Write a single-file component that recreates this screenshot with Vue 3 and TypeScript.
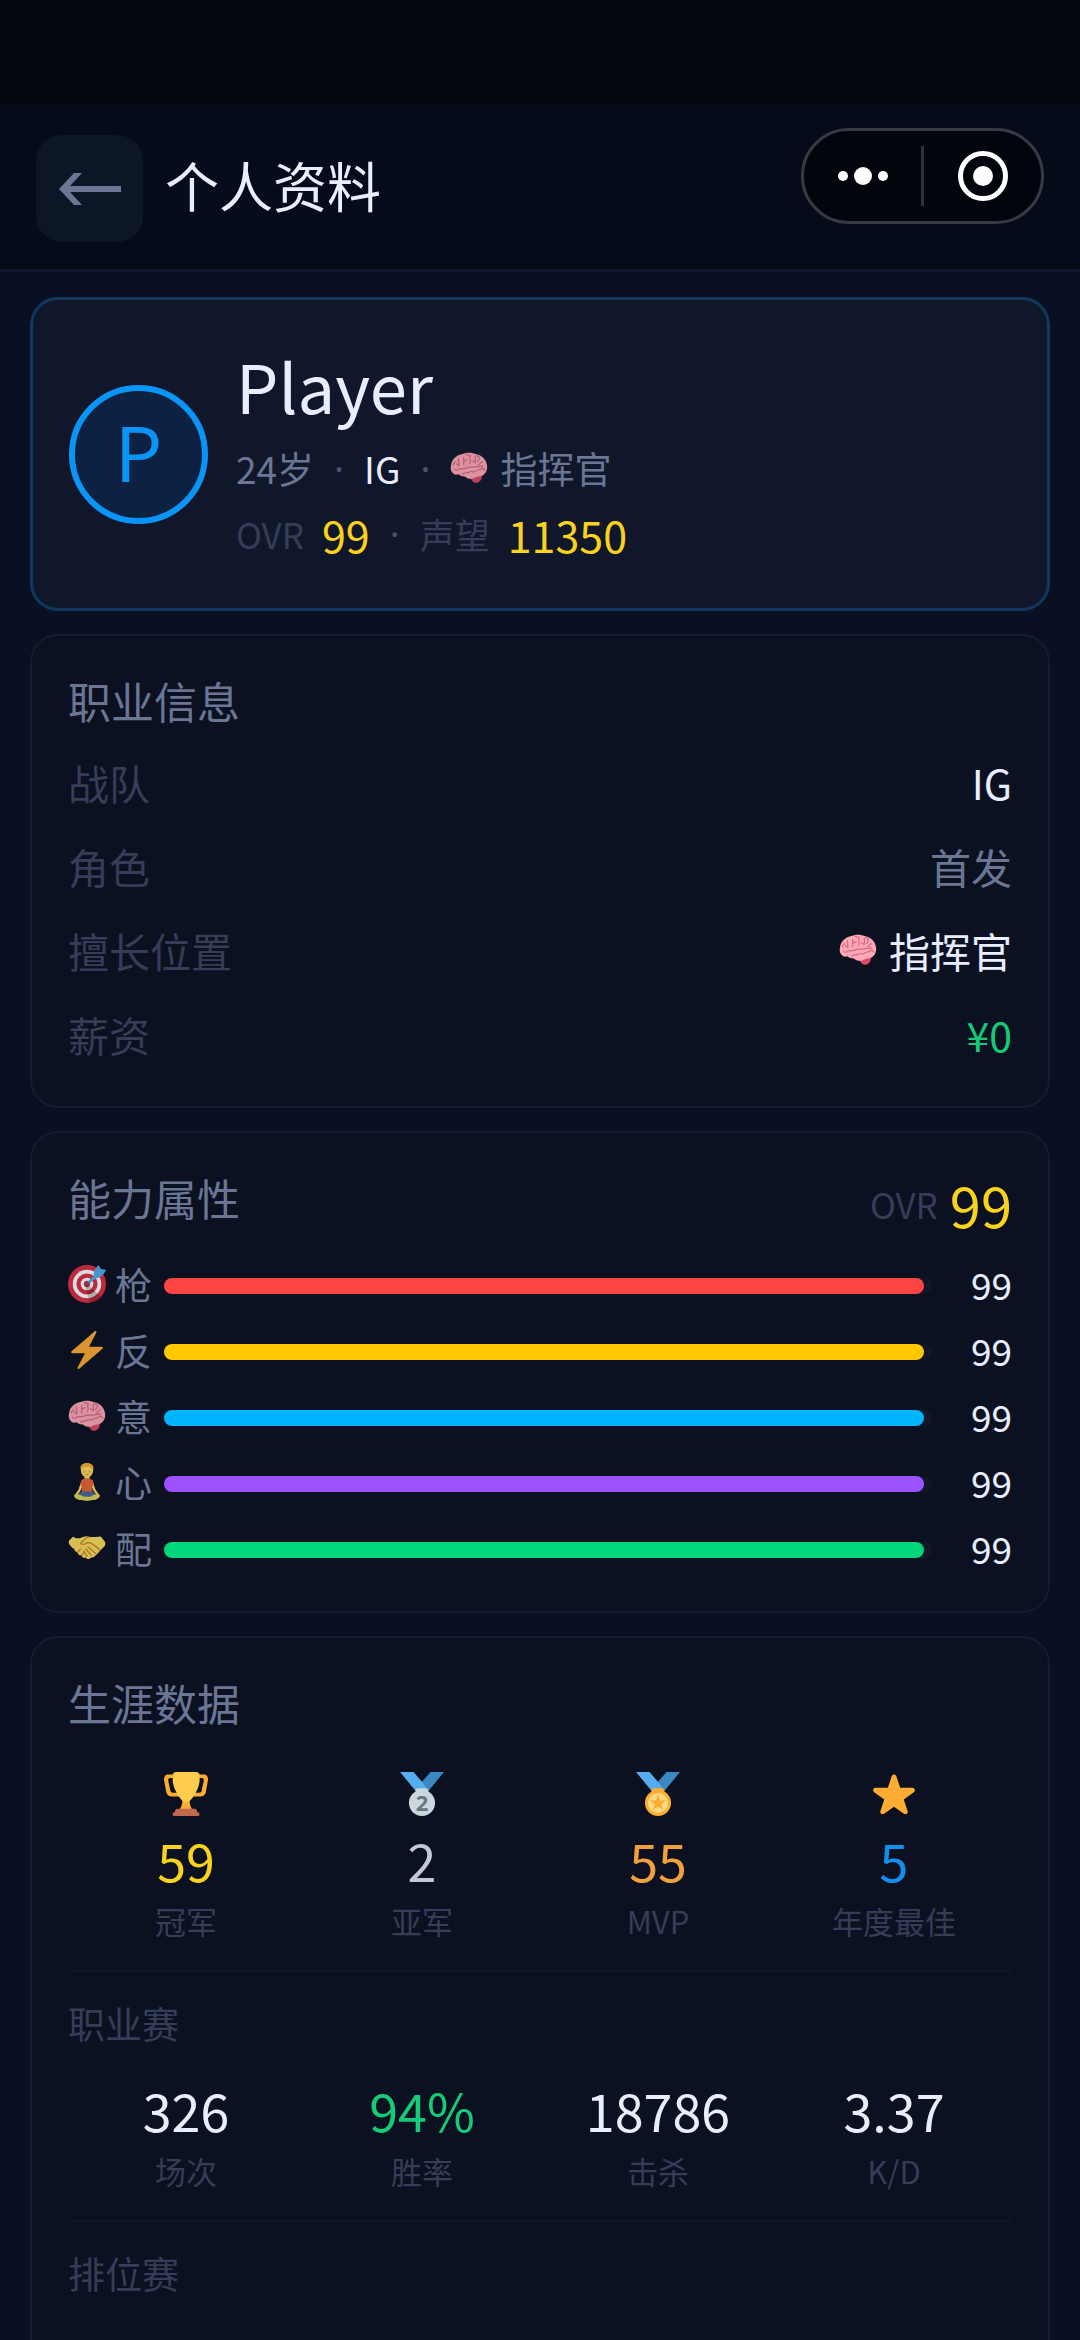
<script setup lang="ts">
type Tone = 'gold' | 'silver' | 'bronze' | 'blue' | 'green' | 'text'

interface Attribute {
  icon: string
  label: string
  value: number
  color: string
}

interface Stat {
  icon?: string
  value: string
  label: string
  tone: Tone
}

const attributes: Attribute[] = [
  { icon: 'target', label: '枪', value: 99, color: '#ff4444' },
  { icon: 'bolt', label: '反', value: 99, color: '#ffc800' },
  { icon: 'brain', label: '意', value: 99, color: '#00b4ff' },
  { icon: 'calm', label: '心', value: 99, color: '#9b51ff' },
  { icon: 'hands', label: '配', value: 99, color: '#00d67a' },
]

const honours: Stat[] = [
  { icon: 'trophy', value: '59', label: '冠军', tone: 'gold' },
  { icon: 'silver', value: '2', label: '亚军', tone: 'silver' },
  { icon: 'medal', value: '55', label: 'MVP', tone: 'bronze' },
  { icon: 'star', value: '5', label: '年度最佳', tone: 'blue' },
]

const proStats: Stat[] = [
  { value: '326', label: '场次', tone: 'text' },
  { value: '94%', label: '胜率', tone: 'green' },
  { value: '18786', label: '击杀', tone: 'text' },
  { value: '3.37', label: 'K/D', tone: 'text' },
]
</script>

<template>
  <div class="app">
    <svg class="sprite" aria-hidden="true">
      <symbol id="brain" viewBox="0 0 36 36">
        <path fill="#dd4a63" d="M19 27c2-3 8-4 11-2 1 3-2 7-6 7-2 0-3-2-5-5z" />
        <path fill="#ffa9b8" d="M4 24C1 22 0 19 1 15.500 1.500 10 6 6 11 5c4-2 10-2 14 0 5 1 9 4.500 10 10 .8 4-.5 8-4 10-3 1-7 1-9 3-3 .5-6 0-8-2-3 0-5-1-6-2-1.500.500-3 .5-4 0z" />
        <g fill="none" stroke="#d6687e" stroke-width="1.100" stroke-linecap="round" stroke-linejoin="round">
          <path d="M4 19c2 2 4 1 5-.500 3 1 7-.500 10-1.500 3 .8 8-.5 12-1" />
          <path d="M8 9c0 3 .5 5 .5 7M6 14l2.500 2M13 8v7M13 12l3-2M19 6c-1 3 1 5-.500 8M24 7v6l-3-2M28 9l-2 3M31 12c-2 0-2 2-4 3" />
          <path d="M12 24c2-3 4 0 6-2s4 1 6-1 4 0 7-3M31 18l2 2M5 12l-2 3M15 5l3 1M25 6l3 2" />
        </g>
      </symbol>
      <symbol id="target" viewBox="0 0 36 36">
        <circle cx="18" cy="18" r="18" fill="#dd2e44" />
        <circle cx="18" cy="18" r="13.500" fill="#fff" />
        <circle cx="18" cy="18" r="10" fill="#dd2e44" />
        <circle cx="18" cy="18" r="6" fill="#fff" />
        <circle cx="18" cy="18" r="3" fill="#dd2e44" />
        <path fill="#000" opacity=".2" d="M18.240 18.282l13.144 11.754A18 18 0 0 1 20.820 35.700L15.700 18.282z" />
        <path d="M18.300 18.300L28 8" stroke="#2a6797" stroke-width="2" stroke-linecap="round" />
        <path fill="#55acee" d="M24.500 10.500c-.8-3 .5-7 4.500-10.500l2.200 3.700L36 4.500c-2 5-5 7.500-9.500 8.200L20 17l-1-1z" />
      </symbol>
      <symbol id="bolt" viewBox="0 0 36 36">
        <path fill="#ffac33" d="M32.938 15.651C32.792 15.260 32.418 15 32 15H19.925L26.890 1.458c.219-.426.106-.947-.271-1.243C26.437.071 26.218 0 26 0c-.233 0-.466.082-.653.243L18 6.588 3.347 19.243c-.316.273-.430.714-.284 1.105S3.582 21 4 21h12.075L9.110 34.542c-.219.426-.106.947.271 1.243.182.144.401.215.619.215.233 0 .466-.082.653-.243L18 29.412l14.653-12.655c.317-.273.430-.714.285-1.106z" />
      </symbol>
      <symbol id="calm" viewBox="0 0 36 36">
        <path fill="#ffdc5d" d="M15.500 10h5v5h-5zM13 16l-3 9-4 6 2 1 4-6 3-7zM23 16l3 9 4 6-2 1-4-6-3-7z" />
        <path fill="#e8653a" d="M13 16c1-1.500 9-1.500 10 0l1.500 4-1.500 2v6H13v-6l-1.500-2z" />
        <path fill="#4a6a9c" d="M12.500 27h11l4 4-9 3-10-3z" />
        <path fill="#dfd75c" d="M6 30c3-1 6 0 9 2h6c3-2 6-3 9-2 1 3-3 5-7 5-2 1-8 1-10 0-4 0-8-2-7-5z" />
        <ellipse cx="18" cy="7" rx="5.800" ry="6.500" fill="#ffdc5d" />
        <path fill="#ffac33" d="M11.800 6C11.500 2 14 0 18 0s6.500 2 6.200 6c-2-1-3-2.500-5-2.500S14 4 11.800 6z" />
        <path d="M14.500 8.200q1 .8 2 0M19.500 8.200q1 .8 2 0M16.500 10.800q1.500 1 3 0" fill="none" stroke="#a5673a" stroke-width=".7" />
      </symbol>
      <symbol id="hands" viewBox="0 0 36 36">
        <path fill="#ffdc5d" d="M1 11l4-4c2 2 4 2 7 1.500C15 7 18 6 20 7.500c4 0 8 0 11-.5l4 5c1 2 0 4-1 5-3 2-5 6-8 8-1 2-3 2-4 2-2 2-4 2-5 0-2 1-4-.5-4-2-2 0-4-1-4-3-2 0-3-2-3-3-2-1-4-3-5-5-.5-1-.500-2 0-3z" />
        <path fill="none" stroke="#c48f2d" stroke-width="1.300" stroke-linecap="round" d="M20 7.500c-4 1-6 4-8 6 1 2 4 1 6-.5h3c3 2 7 4 9 7M19 17l7 6M17 19l5 6M15 21l3 5M9 22l3-3M13 25l2-3" />
      </symbol>
      <symbol id="trophy" viewBox="0 0 36 36">
        <path fill="#ffac33" d="M5.123 5h6C12.227 5 13 4.896 13 6V4c0-1.104-.773-2-1.877-2h-8c-2 0-3.583 2.125-3 5 0 0 1.791 9.375 1.917 9.958C2.373 18.500 4.164 20 6.081 20h6.958c1.105 0-.039-1.896-.039-3v-2c0 1.104-.773 2-1.877 2h-4c-1.104 0-1.833-1.042-2-2S3.539 7.667 3.539 7.667C3.206 5.750 4.018 5 5.123 5zm25.812 0h-6C23.831 5 22 4.896 22 6V4c0-1.104 1.831-2 2.935-2h8c2 0 3.584 2.125 3 5 0 0-1.633 9.419-1.771 10-.354 1.500-2.042 3-4 3h-7.146C21.914 20 22 18.104 22 17v-2c0 1.104 1.831 2 2.935 2h4c1.104 0 1.834-1.042 2-2s1.584-7.333 1.584-7.333C32.851 5.750 32.040 5 30.935 5zM20.832 22c0-6.958-2.709 0-2.709 0s-3-6.958-3 0-3.291 10-3.291 10h12.292s-3.292-3.042-3.292-10z" />
        <path fill="#ffcc4d" d="M29.123 6.577c0 6.775-6.770 18.423-11 18.423-4.231 0-11-11.649-11-18.423V3c0-2 1-3 3-3h16c2 0 3 1 3 3z" />
        <path fill="#c1694f" d="M27 33H9v-1c0-1.104 1.164-2 2.268-2h13.710c1.105 0 2.022.896 2.022 2zM29 34.625c0 .76.165 1.375-1.252 1.375H8.498C7.206 36 7 35.385 7 34.625v-.250C7 33.615 7.738 33 8.498 33h19.250c.76 0 1.252.615 1.252 1.375z" />
      </symbol>
      <symbol id="silver" viewBox="0 0 36 36">
        <path fill="#55acee" d="M18 8l-7-8H0l14 17 11.521-4.750z" />
        <path fill="#3b88c3" d="M25 0l-7 8 5.390 7.312 1.227-1.489L36 0z" />
        <path fill="#ccd6dd" d="M23.205 16.026c.080-.217.131-.448.131-.693 0-1.104-.896-2-2-2h-6.667c-1.105 0-2 .896-2 2 0 .245.050.476.131.693-3.258 1.826-5.464 5.307-5.464 9.307C7.335 31.224 12.111 36 18.002 36s10.667-4.776 10.667-10.667c0-4-2.206-7.481-5.464-9.307z" />
        <text x="18" y="32" text-anchor="middle" class="rank">2</text>
      </symbol>
      <symbol id="medal" viewBox="0 0 36 36">
        <path fill="#55acee" d="M18 8l-7-8H0l14 17 11.521-4.750z" />
        <path fill="#3b88c3" d="M25 0l-7 8 5.390 7.312 1.227-1.489L36 0z" />
        <path fill="#ffac33" d="M23.205 16.026c.080-.217.131-.448.131-.693 0-1.104-.896-2-2-2h-6.667c-1.105 0-2 .896-2 2 0 .245.050.476.131.693-3.258 1.826-5.464 5.307-5.464 9.307C7.335 31.224 12.111 36 18.002 36s10.667-4.776 10.667-10.667c0-4-2.206-7.481-5.464-9.307z" />
        <circle cx="18" cy="25.333" r="8.200" fill="#ffd983" />
        <path fill="#ffac33" d="M18 18.500l1.700 4.700 5 .100-4 3 1.500 4.800-4.200-2.900-4.200 2.900 1.500-4.800-4-3 5-.100z" />
      </symbol>
      <symbol id="star" viewBox="0 0 36 36">
        <path fill="#ffac33" d="M27.287 34.627c-.404 0-.806-.124-1.152-.371L18 28.422l-8.135 5.834c-.343.246-.744.371-1.147.371-.406 0-.810-.127-1.156-.377-.692-.508-.978-1.402-.711-2.216l3.165-9.620-8.254-5.878c-.695-.504-.990-1.396-.732-2.213.257-.819 1.010-1.379 1.868-1.389l10.086-.016 3.184-9.562C16.451 2.541 17.202 2 18 2s1.549.541 1.834 1.362l3.232 9.556 10.042.012c.862.010 1.613.570 1.870 1.389.257.817-.038 1.709-.732 2.213l-8.254 5.878 3.165 9.620c.267.814-.018 1.708-.710 2.216-.347.254-.751.381-1.160.381z" />
      </symbol>
    </svg>

    <div class="status-bar"></div>
    <header class="nav">
      <button class="back" type="button" aria-label="返回">
        <svg viewBox="0 0 62 34" aria-hidden="true">
          <path d="M0 17L15 1h8L11 14h51v6H11l12 13h-8z" />
        </svg>
      </button>
      <h1 class="title">个人资料</h1>
      <div class="capsule">
        <button type="button" aria-label="更多">
          <svg viewBox="0 0 50 18" width="50" height="18" aria-hidden="true">
            <circle cx="5" cy="9" r="5" />
            <circle cx="25" cy="9" r="9" />
            <circle cx="45" cy="9" r="5" />
          </svg>
        </button>
        <span class="capsule-line"></span>
        <button type="button" aria-label="关闭">
          <svg viewBox="0 0 50 50" width="50" height="50" aria-hidden="true">
            <circle cx="25" cy="25" r="22.500" fill="none" stroke="#fff" stroke-width="5" />
            <circle cx="25" cy="25" r="10" />
          </svg>
        </button>
      </div>
    </header>

    <main class="content">
      <section class="card hero">
        <div class="avatar">P</div>
        <div class="identity">
          <h2 class="name">Player</h2>
          <div class="line">
            <span>24岁</span>
            <span class="dot">·</span>
            <span class="team">IG</span>
            <span class="dot">·</span>
            <span class="role"><svg class="emoji dim"><use href="#brain" /></svg>指挥官</span>
          </div>
          <div class="line small">
            <span>OVR</span>
            <strong>99</strong>
            <span class="dot">·</span>
            <span>声望</span>
            <strong>11350</strong>
          </div>
        </div>
      </section>

      <section class="card">
        <h2 class="card-title">职业信息</h2>
        <dl class="info">
          <div class="info-row">
            <dt>战队</dt>
            <dd>IG</dd>
          </div>
          <div class="info-row">
            <dt>角色</dt>
            <dd class="secondary">首发</dd>
          </div>
          <div class="info-row">
            <dt>擅长位置</dt>
            <dd class="role"><svg class="emoji"><use href="#brain" /></svg>指挥官</dd>
          </div>
          <div class="info-row">
            <dt>薪资</dt>
            <dd class="green">¥0</dd>
          </div>
        </dl>
      </section>

      <section class="card">
        <div class="card-head">
          <h2 class="card-title">能力属性</h2>
          <div class="overall"><span>OVR</span><strong>99</strong></div>
        </div>
        <ul class="attributes">
          <li v-for="item in attributes" :key="item.label" class="attribute">
            <span class="attribute-label">
              <svg class="emoji dim"><use :href="`#${item.icon}`" /></svg>{{ item.label }}
            </span>
            <span class="track">
              <span class="fill" :style="{ width: `${item.value}%`, background: item.color }"></span>
            </span>
            <span class="attribute-value">{{ item.value }}</span>
          </li>
        </ul>
      </section>

      <section class="card">
        <h2 class="card-title">生涯数据</h2>
        <div class="stats">
          <div v-for="stat in honours" :key="stat.label" class="stat">
            <span class="stat-icon"><svg><use :href="`#${stat.icon}`" /></svg></span>
            <span class="stat-value" :class="stat.tone">{{ stat.value }}</span>
            <span class="stat-label">{{ stat.label }}</span>
          </div>
        </div>
        <h3 class="sub-title">职业赛</h3>
        <div class="stats">
          <div v-for="stat in proStats" :key="stat.label" class="stat">
            <span class="stat-value" :class="stat.tone">{{ stat.value }}</span>
            <span class="stat-label">{{ stat.label }}</span>
          </div>
        </div>
        <h3 class="sub-title last">排位赛</h3>
      </section>
    </main>
  </div>
</template>

<style>
body {
  margin: 0;
  background: #0a1023;
}
</style>

<style scoped>
* {
  box-sizing: border-box;
}

.app {
  height: 100vh;
  display: flex;
  flex-direction: column;
  overflow: hidden;
  background: #0a1023;
  color: #e8edff;
  font-family: "Noto Sans CJK SC", "Noto Sans", sans-serif;
  font-size: 37px;
}

.sprite {
  display: none;
}

.rank {
  font: bold 18px "Noto Sans", sans-serif;
  fill: #66757f;
}

h1,
h2,
h3,
dl,
dd,
ul {
  margin: 0;
  padding: 0;
  font-weight: 400;
}

strong {
  font-weight: 400;
}

button {
  padding: 0;
  border: 0;
  background: none;
}

.status-bar {
  flex: none;
  height: 104px;
  background: #05070e;
}

.nav {
  flex: none;
  display: flex;
  align-items: flex-start;
  padding: 24px 36px 27px;
  border-bottom: 3px solid #12182c;
  background: #060b19;
}

.back {
  display: grid;
  place-items: center;
  width: 107px;
  height: 107px;
  margin-top: 7px;
  border-radius: 26px;
  background: #0d1626;
}

.back svg {
  width: 62px;
  height: 34px;
  fill: #6b7694;
}

.title {
  flex: 1;
  margin-left: 22px;
  font-size: 54px;
  line-height: 114px;
}

.capsule {
  display: flex;
  align-items: center;
  width: 243px;
  height: 96px;
  border: 3px solid #383a42;
  border-radius: 48px;
  background: #03050d;
}

.capsule button {
  flex: 1;
  display: grid;
  place-items: center;
  height: 100%;
}

.capsule svg {
  fill: #fff;
}

.capsule-line {
  width: 3px;
  height: 60px;
  background: #2e3038;
}

.content {
  flex: 1;
  min-height: 0;
  padding: 25px 30px;
  overflow-y: auto;
  scrollbar-width: none;
}

.card {
  margin-bottom: 23px;
  padding: 32px 36px 30px;
  border: 2px solid #151c31;
  border-radius: 28px;
  background: #0b1120;
}

.hero {
  display: flex;
  align-items: center;
  gap: 28px;
  padding: 41px 36px;
  border: 3px solid #10395f;
  background: #11172a;
}

.avatar {
  flex: none;
  width: 139px;
  height: 139px;
  border: 6px solid #0a94f5;
  border-radius: 50%;
  background: #0d2142;
  color: #0a94f5;
  font-size: 75px;
  line-height: 118px;
  text-align: center;
}

.name {
  margin-bottom: 6px;
  font-size: 67px;
  line-height: 88px;
}

.line {
  display: flex;
  align-items: center;
  gap: 18px;
  color: #6b7694;
  line-height: 66px;
}

.small {
  color: #353d58;
  font-size: 35px;
}

.small strong {
  color: #f8d21c;
  font-size: 43px;
}

.dot {
  width: 14px;
  color: #4a5472;
  font-family: "Noto Sans", sans-serif;
  text-align: center;
}

.team {
  color: #e8edff;
}

.role {
  display: flex;
  align-items: center;
  gap: 12px;
}

.emoji {
  flex: none;
  width: 38px;
  height: 38px;
}

.dim {
  opacity: 0.85;
}

.card-title {
  margin-bottom: 8px;
  color: #6b7694;
  font-size: 43px;
  line-height: 64px;
}

.info-row {
  display: flex;
  justify-content: space-between;
  font-size: 41px;
  line-height: 84px;
}

.info-row dt {
  color: #353d58;
}

.info-row .secondary {
  color: #6b7694;
}

.card-head {
  display: flex;
  justify-content: space-between;
  margin-bottom: 8px;
}

.overall {
  display: flex;
  align-items: center;
  gap: 12px;
  color: #353d58;
  font-size: 35px;
  line-height: 78px;
}

.overall strong {
  color: #f8d21c;
  font-size: 56px;
}

.attributes {
  list-style: none;
}

.attribute {
  display: flex;
  align-items: center;
  gap: 12px;
  line-height: 66px;
}

.attribute-label {
  display: flex;
  align-items: center;
  justify-content: space-between;
  width: 84px;
  color: #6b7694;
}

.track {
  flex: 1;
  height: 16px;
  margin-top: 4px;
  border-radius: 8px;
  background: #101828;
}

.fill {
  display: block;
  height: 100%;
  border-radius: 8px;
}

.attribute-value {
  width: 68px;
  text-align: right;
}

.stats {
  display: grid;
  grid-template-columns: repeat(4, 1fr);
  padding: 22px 0 24px;
}

.stat {
  display: flex;
  flex-direction: column;
  align-items: center;
}

.stat-icon {
  display: flex;
  align-items: center;
  height: 60px;
}

.stat-icon svg {
  width: 44px;
  height: 44px;
}

.stat-value {
  font-size: 52px;
  line-height: 72px;
}

.stat-label {
  color: #353d58;
  font-size: 31px;
  line-height: 50px;
}

.sub-title {
  padding-top: 22px;
  border-top: 2px solid #10172a;
  color: #353d58;
  font-size: 37px;
  line-height: 58px;
}

.last {
  padding-bottom: 60px;
}

.gold {
  color: #f8d21c;
}

.silver {
  color: #c4c6dc;
}

.bronze {
  color: #f2a03c;
}

.blue {
  color: #0f90ee;
}

.green {
  color: #14cb78;
}
</style>
